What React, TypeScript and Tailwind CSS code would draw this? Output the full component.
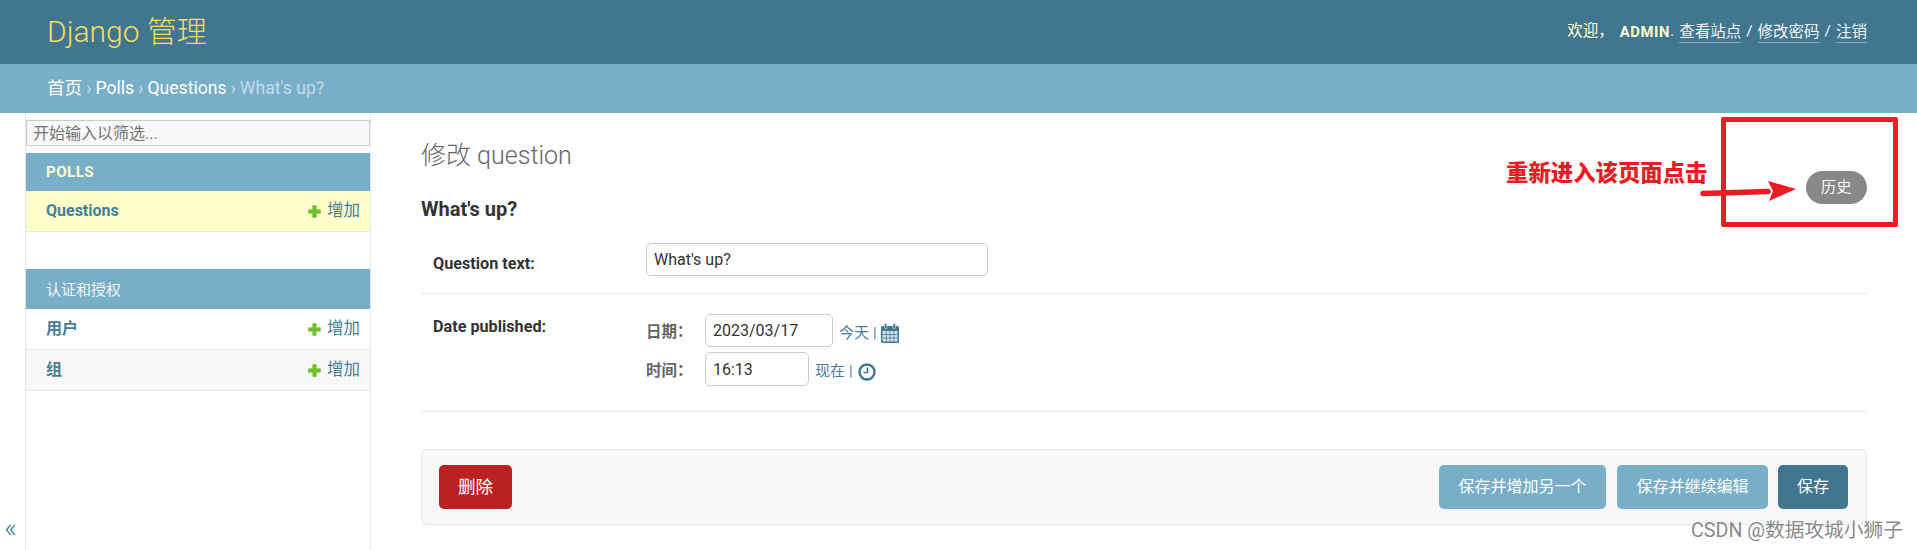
import React from 'react';

const FONT = "font-['Roboto','Noto_Sans_CJK_SC',sans-serif]";

const PlusIcon = () => (
  <svg className="w-[13px] h-[13px]" viewBox="0 0 11 11">
    <path d="M4 0.5h3v3.5h3.5v3h-3.5v3.5h-3v-3.5h-3.5v-3h3.5z" fill="#70bf2b" stroke="#70bf2b" strokeWidth="0.5" strokeLinejoin="round" />
  </svg>
);

const CalendarIcon = () => (
  <svg className="mt-[5px] w-[20px] h-[21px]" viewBox="0 0 20 21">
    <rect x="1" y="3" width="18" height="17" rx="1.5" fill="#417690" />
    <rect x="2.5" y="8" width="15" height="10.5" fill="#d5e5ee" />
    <path d="M2.5 11.5h15M2.5 15h15M6.3 8v10.5M10 8v10.5M13.8 8v10.5" stroke="#417690" strokeWidth="0.8" />
    <rect x="4.5" y="0.5" width="2.5" height="5.5" rx="1.2" fill="#417690" stroke="#fff" strokeWidth="0.5" />
    <rect x="13" y="0.5" width="2.5" height="5.5" rx="1.2" fill="#417690" stroke="#fff" strokeWidth="0.5" />
  </svg>
);

const ClockIcon = () => (
  <svg className="mt-[6px] ml-[2px] w-[18px] h-[18px]" viewBox="0 0 18 18">
    <circle cx="9" cy="9" r="7.5" fill="none" stroke="#417690" strokeWidth="2.4" />
    <path d="M9.5 4.5v5h-4" fill="none" stroke="#417690" strokeWidth="1.6" />
  </svg>
);

const ModelRow = ({ name, highlight, alt }: { name: string; highlight?: boolean; alt?: boolean }) => (
  <div
    className={`flex items-center justify-between h-[41px] pl-[20px] pr-[10px] border-b border-[#e8e8e8] ${
      highlight ? 'bg-[#ffffcc]' : alt ? 'bg-[#f8f8f8]' : 'bg-white'
    }`}
  >
    <span className="text-[16px] font-bold text-[#447e9b]">{name}</span>
    <span className="flex items-center gap-[6px] text-[16.5px] text-[#447e9b]">
      <PlusIcon />
      增加
    </span>
  </div>
);

const App = () => {
  return (
    <div className={`relative w-[1917px] h-[550px] overflow-hidden bg-white text-[#333] ${FONT}`}>
      {/* Header */}
      <header className="flex items-center justify-between h-[64px] pl-[47px] pr-[50px] bg-[#417690]">
        <div className="text-[30px] font-light text-[#f5dd5d] leading-none">Django 管理</div>
        <div className="flex items-center text-[15.5px] text-[#ffffcc]">
          <span>欢迎，</span>
          <strong className="ml-[6px] text-[14.8px] font-bold tracking-[0.6px]">ADMIN</strong>
          <span>.</span>
          <a className="ml-[5px] text-[#f5f5f5] border-b border-[#89a8b8] leading-[20px]">查看站点</a>
          <span className="mx-[5px] text-[#f5f5f5]">/</span>
          <a className="text-[#f5f5f5] border-b border-[#89a8b8] leading-[20px]">修改密码</a>
          <span className="mx-[5px] text-[#f5f5f5]">/</span>
          <a className="text-[#f5f5f5] border-b border-[#89a8b8] leading-[20px]">注销</a>
        </div>
      </header>

      {/* Breadcrumbs */}
      <div className="flex items-center gap-[4px] h-[49px] pl-[47px] bg-[#79aec8] text-[17.6px] text-white">
        <span>首页</span>
        <span className="text-[#c4dce8]">›</span>
        <span>Polls</span>
        <span className="text-[#c4dce8]">›</span>
        <span>Questions</span>
        <span className="text-[#c4dce8]">›</span>
        <span className="text-[#c4dce8]">What's up?</span>
      </div>

      <div className="flex h-[437px]">
        {/* Sidebar toggle */}
        <div className="flex flex-col justify-end w-[26px] pb-[8px] border-r border-[#e8e8e8] text-[#447e9b]">
          <span className="pl-[4px] text-[28px] font-light leading-[28px]">«</span>
        </div>

        {/* Sidebar */}
        <aside className="w-[345px] pt-[7px] border-r border-[#e8e8e8]">
          <input
            readOnly
            placeholder="开始输入以筛选..."
            className="block w-full h-[26px] px-[6px] bg-[#f8f8f8] border border-[#cccccc] text-[16px] placeholder:text-[#757575] outline-none"
          />
          <div className="mt-[7px]">
            <div className="flex items-center h-[38px] pl-[20px] bg-[#79aec8] text-[15px] font-bold text-[#ffffcc] tracking-[0.5px]">
              POLLS
            </div>
            <ModelRow name="Questions" highlight />
          </div>
          <div className="mt-[37px]">
            <div className="flex items-center h-[40px] pl-[20px] pt-[3px] bg-[#79aec8] text-[15px] text-[#f5f5f5]">
              认证和授权
            </div>
            <ModelRow name="用户" />
            <ModelRow name="组" alt />
          </div>
        </aside>

        {/* Content */}
        <main className="flex-1 pl-[50px] pr-[50px]">
          <div className="flex items-start justify-between">
            <div>
              <h1 className="mt-[28px] text-[25px] font-light leading-[30px] text-[#666]">修改 question</h1>
              <h2 className="mt-[26px] text-[20px] font-bold leading-[24px] text-[#333]">What's up?</h2>
            </div>
            <a className="flex items-center justify-center mt-[58px] w-[61px] h-[33px] rounded-full bg-[#888888] text-[15px] text-white tracking-[0.5px]">
              历史
            </a>
          </div>

          {/* Fields */}
          <div className="flex items-start mt-[13px] pt-[9px] pb-[17px] pl-[12px] border-b border-[#e8e8e8]">
            <label className="w-[213px] pt-[12px] text-[16.2px] font-bold leading-[18px] text-[#333]">Question text:</label>
            <input
              readOnly
              value="What's up?"
              className="w-[342px] h-[33px] px-[7px] border border-[#cccccc] rounded-[5px] text-[16px] text-[#333] outline-none"
            />
          </div>
          <div className="flex items-start pt-[20px] pb-[25px] pl-[12px] border-b border-[#e8e8e8]">
            <label className="w-[213px] pt-[4px] text-[16.2px] font-bold leading-[18px] text-[#333]">Date published:</label>
            <div className="flex flex-col gap-[5px]">
              <div className="flex items-center">
                <span className="w-[59px] pt-[5px] text-[15.5px] font-bold text-[#666]">日期：</span>
                <input
                  readOnly
                  value="2023/03/17"
                  className="w-[128px] h-[33px] px-[7px] border border-[#cccccc] rounded-[5px] text-[16px] text-[#333] outline-none"
                />
                <a className="ml-[6px] pt-[5px] text-[15px] text-[#447e9b]">今天</a>
                <span className="mx-[4px] pt-[5px] text-[14px] text-[#447e9b]">|</span>
                <CalendarIcon />
              </div>
              <div className="flex items-center">
                <span className="w-[59px] pt-[5px] text-[15.5px] font-bold text-[#666]">时间：</span>
                <input
                  readOnly
                  value="16:13"
                  className="w-[104px] h-[34px] px-[7px] border border-[#cccccc] rounded-[5px] text-[16px] text-[#333] outline-none"
                />
                <a className="ml-[6px] pt-[5px] text-[15px] text-[#447e9b]">现在</a>
                <span className="mx-[4px] pt-[5px] text-[14px] text-[#447e9b]">|</span>
                <ClockIcon />
              </div>
            </div>
          </div>

          {/* Submit row */}
          <div className="flex items-center justify-between mt-[37px] h-[76px] px-[17px] bg-[#f8f8f8] border border-[#e8e8e8] rounded-[5px]">
            <button className="w-[73px] h-[44px] rounded-[5px] bg-[#ba2121] text-[17.5px] text-white">删除</button>
            <div className="flex items-center pr-[1px]">
              <button className="w-[167px] h-[44px] rounded-[5px] bg-[#79aec8] text-[16px] text-white">保存并增加另一个</button>
              <button className="ml-[11px] w-[151px] h-[44px] rounded-[5px] bg-[#79aec8] text-[16px] text-white">保存并继续编辑</button>
              <button className="ml-[10px] w-[70px] h-[44px] rounded-[5px] bg-[#417690] text-[16px] text-white">保存</button>
            </div>
          </div>
        </main>
      </div>

      {/* Screenshot annotation */}
      <div className="absolute left-[1721px] top-[117px] w-[177px] h-[110px] border-[5px] border-[#ed1c24] rounded-[2px]" />
      <div className="absolute left-[1506px] top-[158px] text-[22.4px] font-black leading-[30px] text-[#ed1c24] whitespace-nowrap">
        重新进入该页面点击
      </div>
      <svg className="absolute left-[1698px] top-[178px] w-[100px] h-[26px]" viewBox="0 0 100 26">
        <path d="M5 15.5L70 13.5" stroke="#ed1c24" strokeWidth="5.5" strokeLinecap="round" />
        <path d="M70 3L98 11L71 23L75 13z" fill="#ed1c24" />
      </svg>

      {/* Watermark */}
      <div className="absolute left-[1691px] top-[519px] text-[19.7px] leading-[24px] text-[#8a8a8a] whitespace-nowrap">
        CSDN @数据攻城小狮子
      </div>
    </div>
  );
};

export default App;
